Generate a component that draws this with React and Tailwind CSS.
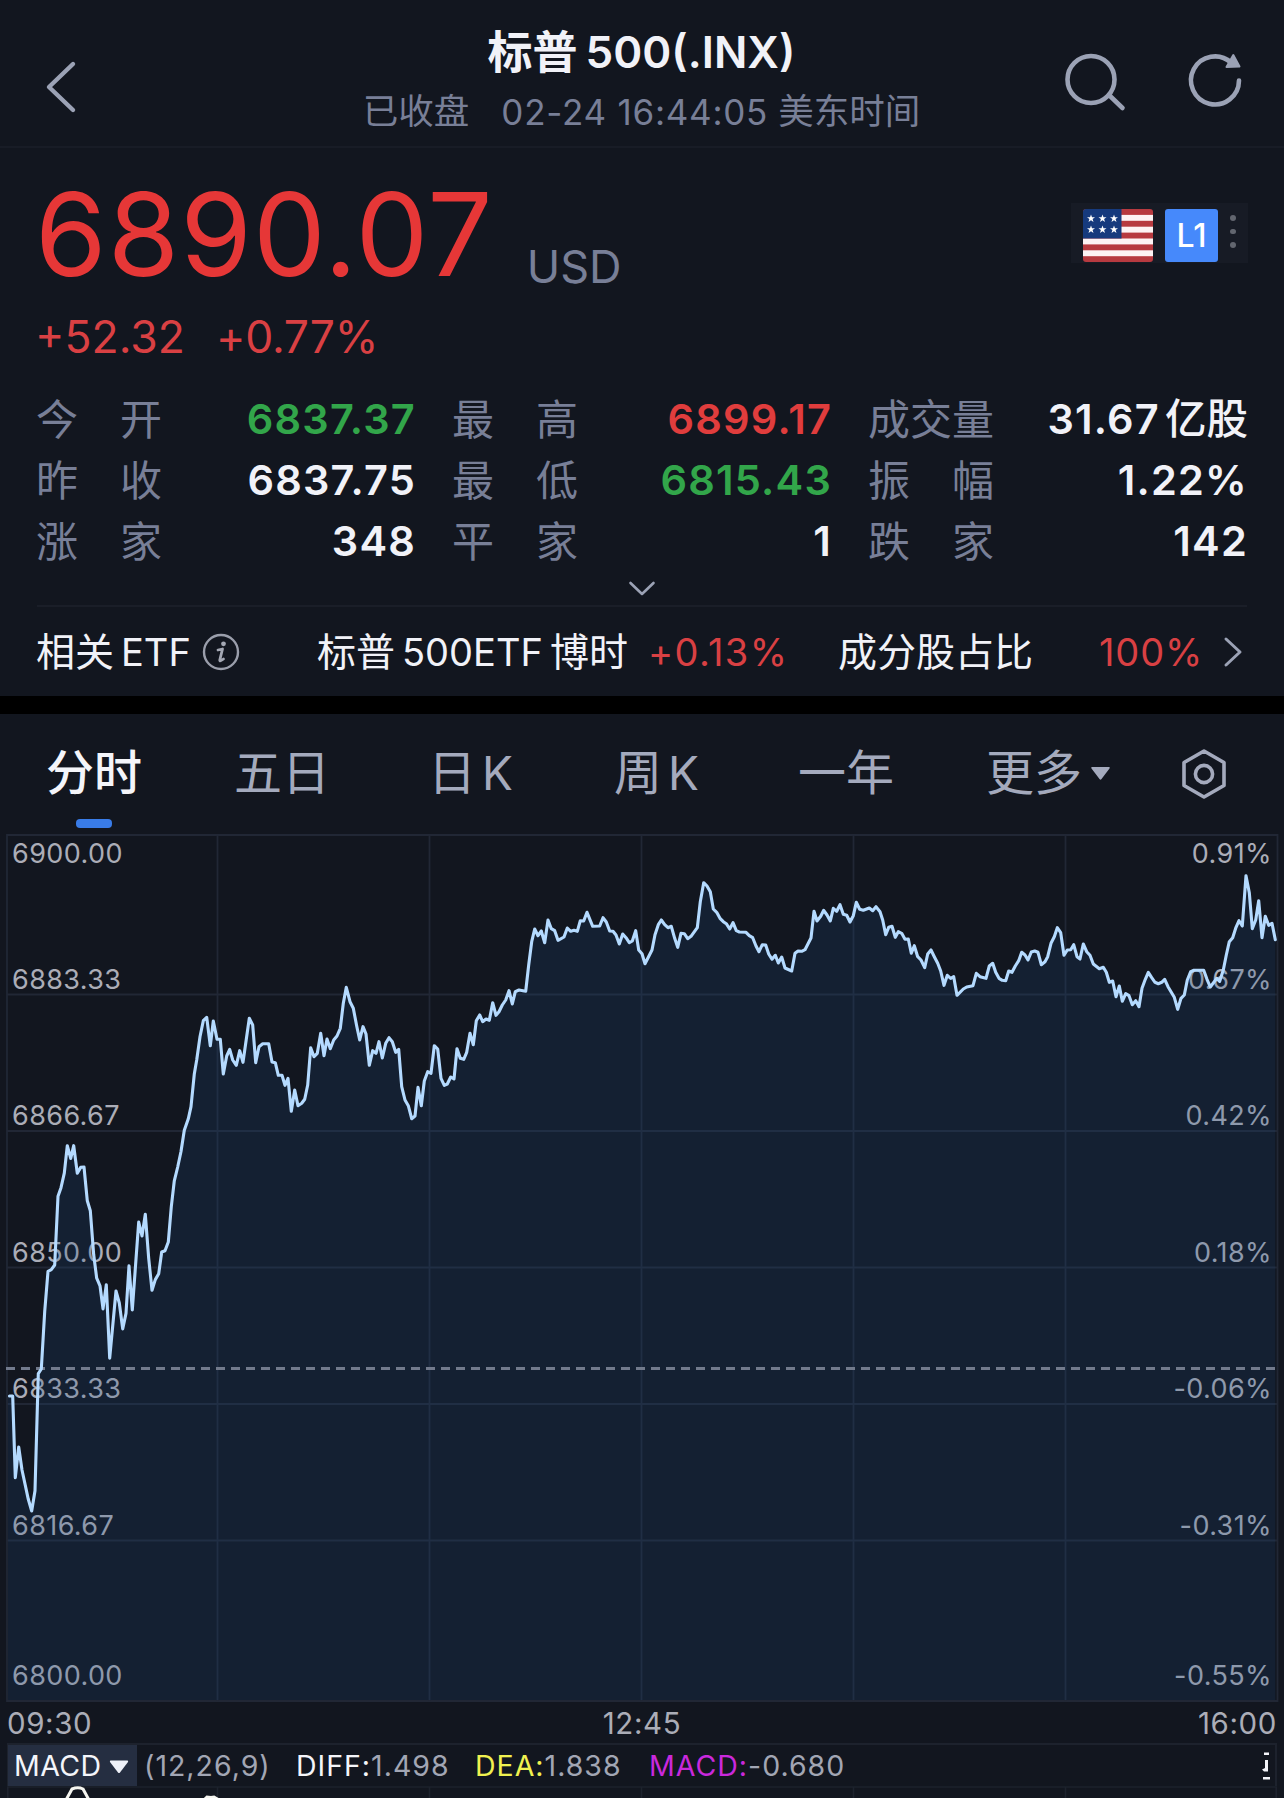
import React from 'react';

// Price line, one [x, y] pair per sample
const pricePoints = [
  [9.5, 1396], [12.7, 1396], [15.3, 1477.6], [18.7, 1447], [22, 1470], [28.3, 1499.3], [31.7, 1511], [35, 1490.7],
  [38.3, 1373.6], [41.3, 1369], [44.7, 1311.6], [48, 1271.3], [51.3, 1269.6], [54.7, 1265], [58, 1196.3], [61, 1187.7],
  [64.3, 1173.2], [67.3, 1145.7], [70.7, 1158.4], [73.7, 1145.7], [77.3, 1173.2], [80.7, 1167.4], [84, 1167], [87.3, 1200.8],
  [90.3, 1210.7], [93.7, 1254.8], [96.7, 1278.2], [100, 1285.8], [103, 1308.9], [106.3, 1284.8], [109.7, 1358.1], [116, 1291],
  [119.3, 1303], [122.7, 1328.9], [126, 1313.4], [129, 1265.8], [132.3, 1309.9], [138.7, 1222.1], [142, 1235.9], [145.3, 1214.2],
  [148.7, 1258.3], [152, 1290.3], [155.3, 1279.6], [158.7, 1273.8], [161.7, 1252], [165, 1250.7], [168.3, 1242], [171.3, 1206.6],
  [174.3, 1180.8], [177.7, 1167], [181, 1151.5], [184.3, 1130.2], [188.3, 1118.8], [191, 1106.7], [194.3, 1074], [196.7, 1060],
  [200, 1036.7], [203.3, 1020.7], [206.7, 1017.3], [210.3, 1045.7], [213.3, 1021], [217, 1039.3], [220.3, 1039.3], [223.3, 1074],
  [226.7, 1056], [229.7, 1049.3], [232.7, 1060], [236.3, 1065.3], [239.7, 1050.7], [243, 1062.3], [249.3, 1018.3], [252.7, 1025],
  [255.7, 1062.7], [259, 1046.7], [262.7, 1043.7], [268.7, 1043.7], [272, 1062], [275.3, 1062.7], [278.3, 1075.3], [282, 1075.3],
  [285, 1085.3], [288, 1078.3], [291.3, 1111.3], [294.7, 1090], [298, 1105.7], [301.7, 1103.3], [304.7, 1099.3], [307.7, 1085],
  [310.7, 1047.7], [314, 1056.7], [317.3, 1053.3], [320.7, 1033.3], [324, 1055.7], [327, 1039], [330.3, 1048.7], [333.7, 1040],
  [337, 1036], [340.3, 1028.3], [343.3, 1003.3], [346.3, 987.3], [350, 1001.7], [353.3, 1008.3], [356.7, 1026], [359.7, 1040],
  [363, 1026.7], [366, 1034], [369.3, 1065.3], [372.7, 1050.7], [376, 1053.3], [379, 1041.7], [382.3, 1058], [385.7, 1043.3],
  [389, 1037.7], [392.3, 1041.7], [395.7, 1052.3], [398.7, 1049.3], [401.7, 1086.7], [405, 1100], [408.3, 1105.7], [411.7, 1118.7],
  [415, 1116], [418, 1087.3], [421.3, 1105.7], [424.3, 1081], [427.7, 1071.7], [431, 1073.3], [434.3, 1045.7], [437.7, 1049],
  [441, 1078.3], [444.3, 1085.3], [447.3, 1084], [450.7, 1077], [454, 1079], [457, 1048.7], [460.3, 1058.3], [463.7, 1059.3],
  [466.7, 1052.3], [470, 1033.3], [473.3, 1044.7], [476.3, 1020.7], [479.7, 1015], [482.7, 1021.7], [486, 1019], [489.3, 1020.3],
  [492.7, 1002.7], [496, 1015.3], [499, 1011.7], [502.3, 1005], [505.7, 1000], [509, 990.7], [512.3, 1004], [515.3, 991.7],
  [519, 990], [525.7, 991.3], [528.7, 965], [531.7, 941.7], [534.7, 929], [538, 935.7], [541.3, 931], [544.7, 942.7],
  [548, 920], [551.3, 928.7], [554.7, 930.7], [558, 940.3], [564, 937], [567.3, 928], [570.7, 931.3], [574, 930.3],
  [577.3, 931.3], [580.3, 920.7], [583.7, 921], [587, 912.3], [592.7, 926.3], [599.7, 926], [603, 917.7], [606.3, 922],
  [609.7, 931], [613, 931.3], [616, 935], [619.3, 944], [622.7, 934], [626, 937.7], [629.3, 942.7], [632.3, 941],
  [635.7, 930.7], [638.7, 950], [642, 953.7], [645, 963.7], [652, 950], [655, 934.7], [658.3, 924.7], [661.3, 920],
  [664.7, 924.7], [668, 927.7], [671.3, 926.3], [674.7, 938.3], [677.7, 947.3], [681, 933.3], [684.3, 933.7], [687.7, 938.7],
  [691, 936.3], [697.3, 927.7], [700.3, 901.7], [703.7, 882.7], [707, 886], [710.3, 891.7], [713.3, 909], [716.7, 912.3],
  [720, 918.3], [723.3, 921.7], [726.3, 923.7], [729.7, 929], [733, 922.7], [736.3, 930.7], [739.3, 932], [746, 932.3],
  [749.3, 935.7], [752.7, 937.7], [756, 946], [759, 951.7], [762.3, 944.7], [765.7, 945], [768.7, 954], [772, 959.3],
  [775.3, 955.3], [778.3, 963], [781.7, 957], [785, 968], [791.7, 971], [795, 953.3], [798, 951], [801.7, 951.3],
  [805, 949.7], [808.3, 943.3], [811, 938], [814, 911.3], [817, 921], [820.7, 916.3], [823.7, 910.3], [827, 915],
  [830.3, 921], [833.3, 908.3], [836.7, 911.3], [840, 904.7], [843.3, 914.3], [846.7, 915.3], [850, 922], [853.3, 915.7],
  [856.3, 902.3], [859.7, 909.3], [863.3, 910.3], [869.3, 908], [872.7, 910.7], [876, 906.7], [880, 911.7], [882.7, 920],
  [885.7, 934.7], [888.7, 927.3], [892, 926.3], [895.3, 937.3], [898.3, 931.7], [901.7, 933.3], [905, 939.3], [908.3, 939],
  [911.3, 953.3], [914.3, 945.7], [917.7, 956.7], [921, 960], [924.7, 967.7], [927.7, 954], [931, 950], [934.3, 956.7],
  [937.7, 963.3], [940.7, 971], [944, 985.3], [947.3, 975.3], [950.7, 978.3], [953.7, 976.7], [957, 995.3], [963.3, 989],
  [966.7, 987], [973, 985.7], [976.3, 973.3], [980, 976.7], [986, 978.3], [989.3, 966], [992.7, 963.3], [995.7, 972.3],
  [999, 978.3], [1002.3, 980.3], [1005.7, 980.7], [1008.7, 971], [1012, 972.3], [1015.3, 966], [1018.7, 960.7], [1021.7, 952.3],
  [1025, 955], [1028, 960], [1031.3, 952], [1034.7, 951], [1038, 952.3], [1041.3, 964.7], [1045, 961.7], [1047.7, 956.7],
  [1051, 943.3], [1054.3, 936.7], [1057.3, 927.7], [1060.7, 932.7], [1064, 955.3], [1067.3, 950], [1070.7, 949.7], [1073.7, 944.7],
  [1077, 956.7], [1080, 959], [1083.3, 944], [1086.7, 951.7], [1090, 955.3], [1093.3, 964], [1099.3, 968.7], [1103.3, 967.3],
  [1106.3, 972.3], [1109.3, 982.3], [1112.7, 981], [1116, 996.7], [1119.3, 986], [1122.3, 1001.3], [1125.7, 993.7], [1129, 995.7],
  [1132.3, 1004.7], [1135.7, 1000.7], [1139, 1006.7], [1142, 988.3], [1145.3, 979.3], [1148.3, 972.3], [1151.7, 977.7], [1155, 982.3],
  [1158.3, 983.7], [1161.7, 982.3], [1164.7, 979.3], [1168, 986.7], [1174.3, 997.3], [1177.7, 1009.3], [1181, 998.3], [1184.3, 995],
  [1187.3, 980], [1190.7, 971.7], [1194, 970.3], [1203.7, 970.3], [1207, 979.3], [1210.3, 987], [1216.7, 978.3], [1219.7, 981.3],
  [1223.3, 970], [1226.3, 955], [1229.3, 941.7], [1232.7, 937.7], [1236, 927.3], [1239, 920.7], [1242.3, 926], [1246, 875.7],
  [1249.3, 892.7], [1252.3, 928.7], [1255.7, 920], [1258.7, 900.7], [1262, 937.7], [1265.3, 916.3], [1268.7, 925.3], [1272, 923.3],
  [1275.3, 939.7],
];

const stats = [
  { label: ['今', '开'], value: '6837.37', color: 'text-[#32a64a]' },
  { label: ['最', '高'], value: '6899.17', color: 'text-[#e03d3d]' },
  { label: ['成', '交', '量'], value: '31.67', unit: '亿股', color: 'text-[#f1f2f8]' },
  { label: ['昨', '收'], value: '6837.75', color: 'text-[#f1f2f8]' },
  { label: ['最', '低'], value: '6815.43', color: 'text-[#32a64a]' },
  { label: ['振', '幅'], value: '1.22%', color: 'text-[#f1f2f8]' },
  { label: ['涨', '家'], value: '348', color: 'text-[#f1f2f8]' },
  { label: ['平', '家'], value: '1', color: 'text-[#f1f2f8]' },
  { label: ['跌', '家'], value: '142', color: 'text-[#f1f2f8]' },
];

// top = offset of the label inside the chart
const axisLabels = [
  { price: '6900.00', percent: '0.91%', top: 'top-[4px]' },
  { price: '6883.33', percent: '0.67%', top: 'top-[130px]' },
  { price: '6866.67', percent: '0.42%', top: 'top-[266px]' },
  { price: '6850.00', percent: '0.18%', top: 'top-[403px]' },
  { price: '6833.33', percent: '-0.06%', top: 'top-[539px]' },
  { price: '6816.67', percent: '-0.31%', top: 'top-[676px]' },
  { price: '6800.00', percent: '-0.55%', top: 'top-[826px]' },
];

const gridX = [217.5, 429.5, 641.5, 853.5, 1065.5];
const gridY = [994.5, 1131, 1267.5, 1404, 1540.5];

function Header() {
  return (
    <header className="flex h-[148px] justify-between border-b-2 border-[#181c26]">
      <svg className="ml-[39px] mt-[56px]" width="44" height="62" viewBox="40 56 44 62" fill="none" stroke="#9ba2b5" strokeWidth="4.4" strokeLinecap="round" strokeLinejoin="round">
        <path d="M74 64 L50 87 L74 110" />
      </svg>
      <div className="ml-[140px] flex w-[600px] flex-col items-center">
        <h1 className="mt-[24px] flex h-[56px] items-center whitespace-nowrap text-[45px] font-semibold leading-none text-[#f1f2f8]">
          <span>标普</span>
          <span className="ml-[8px] text-[44px]">500(.INX)</span>
        </h1>
        <p className="mt-[9px] flex h-[46px] items-center whitespace-nowrap text-[35.5px] leading-none text-[#787f97]">
          <span>已收盘</span>
          <span className="ml-[32px] text-[35px] tracking-[0.75px]">02-24 16:44:05</span>
          <span className="ml-[10px]">美东时间</span>
        </p>
      </div>
      <div className="mr-[36px] mt-[45px] flex">
        <svg width="70" height="70" viewBox="1060 44 70 70" fill="none" stroke="#9ba2b5" strokeWidth="4.6" strokeLinecap="round">
          <circle cx="1091" cy="78.5" r="23.5" />
          <path d="M1109 94 L1122.5 107" />
        </svg>
        <svg className="ml-[50px]" width="68" height="70" viewBox="1180 44 68 70" fill="none" stroke="#9ba2b5" strokeWidth="4.6" strokeLinecap="round">
          <path d="M1239 79.5 A24 24 0 1 1 1231 61.5" />
          <path d="M1233.3 54 L1239.5 65.5 L1226.5 66 Z" fill="#9ba2b5" strokeWidth="2" strokeLinejoin="round" />
        </svg>
      </div>
    </header>
  );
}

function UsFlag() {
  return (
    <svg width="70" height="53" viewBox="0 0 70 53">
      <clipPath id="flag"><rect width="70" height="53" rx="3" /></clipPath>
      <g clipPath="url(#flag)">
        <rect width="70" height="53" fill="#b73a40" />
        {[1, 3, 5, 7].map((i) => (
          <rect key={i} y={i * 5.9} width="70" height="5.9" fill="#fdf3f4" />
        ))}
        <rect width="38.5" height="29.5" fill="#163a7d" />
        {[8, 19.5, 31].map((x) =>
          [9.5, 20.5].map((y) => (
            <path key={`${x}-${y}`} transform={`translate(${x} ${y})`} d="M0 -4 L1 -1.2 L4 -1.2 L1.6 .6 L2.5 3.5 L0 1.8 L-2.5 3.5 L-1.6 .6 L-4 -1.2 L-1 -1.2 Z" fill="#fff" />
          ))
        )}
      </g>
    </svg>
  );
}

function Quote() {
  return (
    <section className="flex h-[241px] justify-between pl-[35px] pr-[36px]">
      <div>
        <div className="mt-[28px] flex h-[116px] items-end whitespace-nowrap">
          <span className="text-[115.5px] leading-[116px] tracking-[1.1px] text-[#e63737]">6890.07</span>
          <span className="-mb-[3px] ml-[33px] text-[45px] leading-[56px] text-[#787f97]">USD</span>
        </div>
        <div className="mt-[17px] flex h-[56px] items-center whitespace-nowrap text-[44.5px] leading-none text-[#d94043]">
          <span>+52.32</span>
          <span className="ml-[31px] tracking-[-0.2px]">+0.77%</span>
        </div>
      </div>
      <div className="mt-[55px] flex h-[60px] w-[177px] items-start bg-[#171b25] pl-[12px] pt-[6px]">
        <UsFlag />
        <div className="ml-[12px] flex h-[53px] w-[53px] items-center justify-center rounded-[3px] bg-[#4689fb] text-[32px] font-medium leading-none text-white">L1</div>
        <div className="ml-[12px] mt-[6px] flex flex-col gap-[8px]">
          <i className="size-[5.5px] rounded-full bg-[#62666f]" />
          <i className="size-[5.5px] rounded-full bg-[#62666f]" />
          <i className="size-[5.5px] rounded-full bg-[#62666f]" />
        </div>
      </div>
    </section>
  );
}

function Stats() {
  return (
    <section className="grid grid-cols-3 gap-x-[38px] px-[37px]">
      {stats.map((item) => (
        <div key={item.label.join('') + item.value} className="flex h-[61px] items-center justify-between">
          <div className="-ml-[1px] flex w-[126px] justify-between text-[42px] leading-none text-[#787f97]">
            {item.label.map((ch) => (
              <span key={ch}>{ch}</span>
            ))}
          </div>
          <div className={`-mr-[1px] flex items-center whitespace-nowrap text-[41.5px] font-semibold leading-none ${item.color}`}>
            <span className="tracking-[1.2px]">{item.value}</span>
            {item.unit && <span className="ml-[5px] font-medium">{item.unit}</span>}
          </div>
        </div>
      ))}
    </section>
  );
}

function EtfRow() {
  return (
    <section className="mx-[37px] flex h-[91px] items-center whitespace-nowrap border-t-2 border-[#1a1e28] text-[39px] leading-none text-[#f1f2f8]">
      <div className="-ml-[1px] flex w-[281px] items-center">
        <span>相关</span>
        <span className="ml-[7px] text-[38px]">ETF</span>
        <svg className="ml-[11px]" width="38" height="38" viewBox="0 0 38 38" fill="none">
          <circle cx="19" cy="19" r="17" stroke="#9a9eab" strokeWidth="2.4" />
          <circle cx="21.5" cy="10.8" r="2.4" fill="#a4a8b4" />
          <path d="M16 17 L20.5 16 L17.8 27 Q17.5 29 21.5 26" stroke="#a4a8b4" strokeWidth="2.8" strokeLinecap="round" strokeLinejoin="round" />
        </svg>
      </div>
      <div className="flex w-[331px] items-center">
        <span>标普</span>
        <span className="ml-[7px] text-[38px]">500ETF</span>
        <span className="ml-[7px]">博时</span>
      </div>
      <span className="w-[190px] text-[38px] tracking-[1.4px] text-[#d94043]">+0.13%</span>
      <span className="w-[261px]">成分股占比</span>
      <span className="text-[38px] tracking-[0.9px] text-[#d94043]">100%</span>
      <svg className="ml-auto mr-[3px]" width="22" height="34" viewBox="0 0 22 34" fill="none" stroke="#9ba2b5" strokeWidth="3" strokeLinecap="round" strokeLinejoin="round">
        <path d="M4 4 L18 17 L4 30" />
      </svg>
    </section>
  );
}

function Tabs() {
  return (
    <nav className="flex h-[120px] whitespace-nowrap pl-[46px] text-[48px] leading-none text-[#a4aabd]">
      <div className="flex w-[188px] flex-col text-[#f4f5fa]">
        <span className="flex h-[105px] items-center pt-[13px] font-medium">分时</span>
        <span className="ml-[30px] h-[9px] w-[36px] rounded-[4px] bg-[#397ce8]" />
      </div>
      <span className="flex h-[105px] w-[194px] items-center pt-[13px]">五日</span>
      <span className="flex h-[105px] w-[186px] items-center pt-[13px]">日<span className="ml-[6px] text-[46px]">K</span></span>
      <span className="flex h-[105px] w-[184px] items-center pt-[13px]">周<span className="ml-[6px] text-[46px]">K</span></span>
      <span className="flex h-[105px] w-[188px] items-center pt-[13px]">一年</span>
      <span className="flex h-[105px] w-[194px] items-center pt-[13px]">
        更多
        <svg className="ml-[8px]" width="21" height="15" viewBox="0 0 21 15">
          <path d="M2 1 H19 Q20.5 1 19.5 2.5 L11.5 13 Q10.5 14.5 9.5 13 L1.5 2.5 Q.5 1 2 1 Z" fill="#a4aabd" />
        </svg>
      </span>
      <svg className="mt-[33px]" width="48" height="54" viewBox="0 0 48 54" fill="none" stroke="#a4aabd" strokeWidth="3.6" strokeLinejoin="round">
        <path d="M24 4 L44 15.5 V38.5 L24 50 L4 38.5 V15.5 Z" />
        <circle cx="24" cy="27" r="8.6" />
      </svg>
    </nav>
  );
}

function PriceChart() {
  const line = pricePoints.map((p) => p.join(',')).join(' ');

  return (
    <section className="relative h-[868px] text-[27px] leading-none tracking-[0.4px] text-[#abadb7]">
      {axisLabels.map((row) => (
        <div key={row.price} className={`absolute left-[12px] right-[12px] flex h-[30px] items-center justify-between ${row.top}`}>
          <span>{row.price}</span>
          <span>{row.percent}</span>
        </div>
      ))}
      <svg className="absolute inset-0" width="1284" height="868" viewBox="0 834 1284 868" fill="none">
        <g stroke="#212735" strokeWidth="1.8">
          <path d="M7 835 H1277.5 V1701 H7 Z" />
          {gridX.map((x) => <path key={x} d={`M${x} 835 V1701`} />)}
          {gridY.map((y) => <path key={y} d={`M7 ${y} H1277`} />)}
        </g>
        <polygon points={`8,1396 ${line} 1275.3,1700 8,1700`} fill="#1f4a82" fillOpacity="0.2" />
        <path d="M6 1368.5 H1277" stroke="#727a8c" strokeWidth="2.8" strokeDasharray="9 6" />
        <polyline points={line} stroke="#b4daff" strokeWidth="3.1" strokeLinejoin="round" strokeLinecap="round" />
      </svg>
    </section>
  );
}

function Macd() {
  return (
    <section className="mx-[7px] text-[28.5px] leading-none text-[#a2a6b4]">
      <div className="flex h-[43px] items-center whitespace-nowrap border-2 border-b-0 border-[#1d222d]">
        <div className="-ml-[1px] flex h-[41px] w-[129px] shrink-0 items-center bg-[#252e41] pl-[6px] pt-[2px] tracking-[0.4px] text-[#f4f5fa]">
          MACD
          <svg className="ml-[8px]" width="20" height="14" viewBox="0 0 20 14">
            <path d="M1.5 .5 H18.5 Q19.5 .8 19 2 L11 12.5 Q10 13.7 9 12.5 L1 2 Q.5 .8 1.5 .5 Z" fill="#eef1f8" />
          </svg>
        </div>
        <span className="ml-[7px] w-[152px] pt-[2px] tracking-[1px]">(12,26,9)</span>
        <span className="w-[179px] pt-[2px] tracking-[1px]"><span className="text-[#f4f5fa]">DIFF:</span>1.498</span>
        <span className="w-[174px] pt-[2px] tracking-[1px]"><span className="text-[#f0f150]">DEA:</span>1.838</span>
        <span className="pt-[2px] tracking-[1px]"><span className="text-[#c929dc]">MACD:</span>-0.680</span>
        <svg className="ml-auto mr-[4px]" width="10" height="30" viewBox="0 0 10 30" fill="#f4f5fa">
          <path d="M3 1.5 H8 V4 H3 Z M4 9 H7 V20.5 H3 L1 18.5 L4 17 Z M2 26 H9 V28.5 H2 Z" />
        </svg>
      </div>
      <svg className="block" width="1270" height="13" viewBox="7 1785 1270 13" fill="none">
        <g stroke="#1d222d" strokeWidth="1.6">
          <path d="M7 1786 H1277 M7.8 1786 V1798 M1276.2 1786 V1798" />
          {gridX.map((x) => <path key={x} d={`M${x} 1786 V1798`} />)}
        </g>
        <path d="M66 1799 L72 1788 Q78 1785.5 83 1788 L89 1799" stroke="#f5f5f0" strokeWidth="3" />
        <path d="M204 1799 L207 1796 L211 1796.5 L214 1796 L219 1799" stroke="#f5f5f0" strokeWidth="3" />
      </svg>
    </section>
  );
}

function App() {
  return (
    <div className="h-[1798px] w-[1284px] overflow-hidden bg-[#12161f] font-['Inter','Noto_Sans_CJK_SC',sans-serif]">
      <Header />
      <Quote />
      <Stats />
      <div className="flex h-[33px] items-start justify-center pt-[8px]">
        <svg width="30" height="18" viewBox="0 0 30 18" fill="none" stroke="#9ba2b5" strokeWidth="2.6" strokeLinecap="round" strokeLinejoin="round">
          <path d="M3.5 3 L15 14 L26.5 3" />
        </svg>
      </div>
      <EtfRow />
      <div className="h-[18px] bg-black" />
      <Tabs />
      <PriceChart />
      <div className="mx-[7px] grid h-[41px] grid-cols-3 items-center pt-[3px] text-[29.5px] leading-none tracking-[0.6px] text-[#abadb7]">
        <span>09:30</span>
        <span className="text-center">12:45</span>
        <span className="text-right">16:00</span>
      </div>
      <Macd />
    </div>
  );
}

export default App;
